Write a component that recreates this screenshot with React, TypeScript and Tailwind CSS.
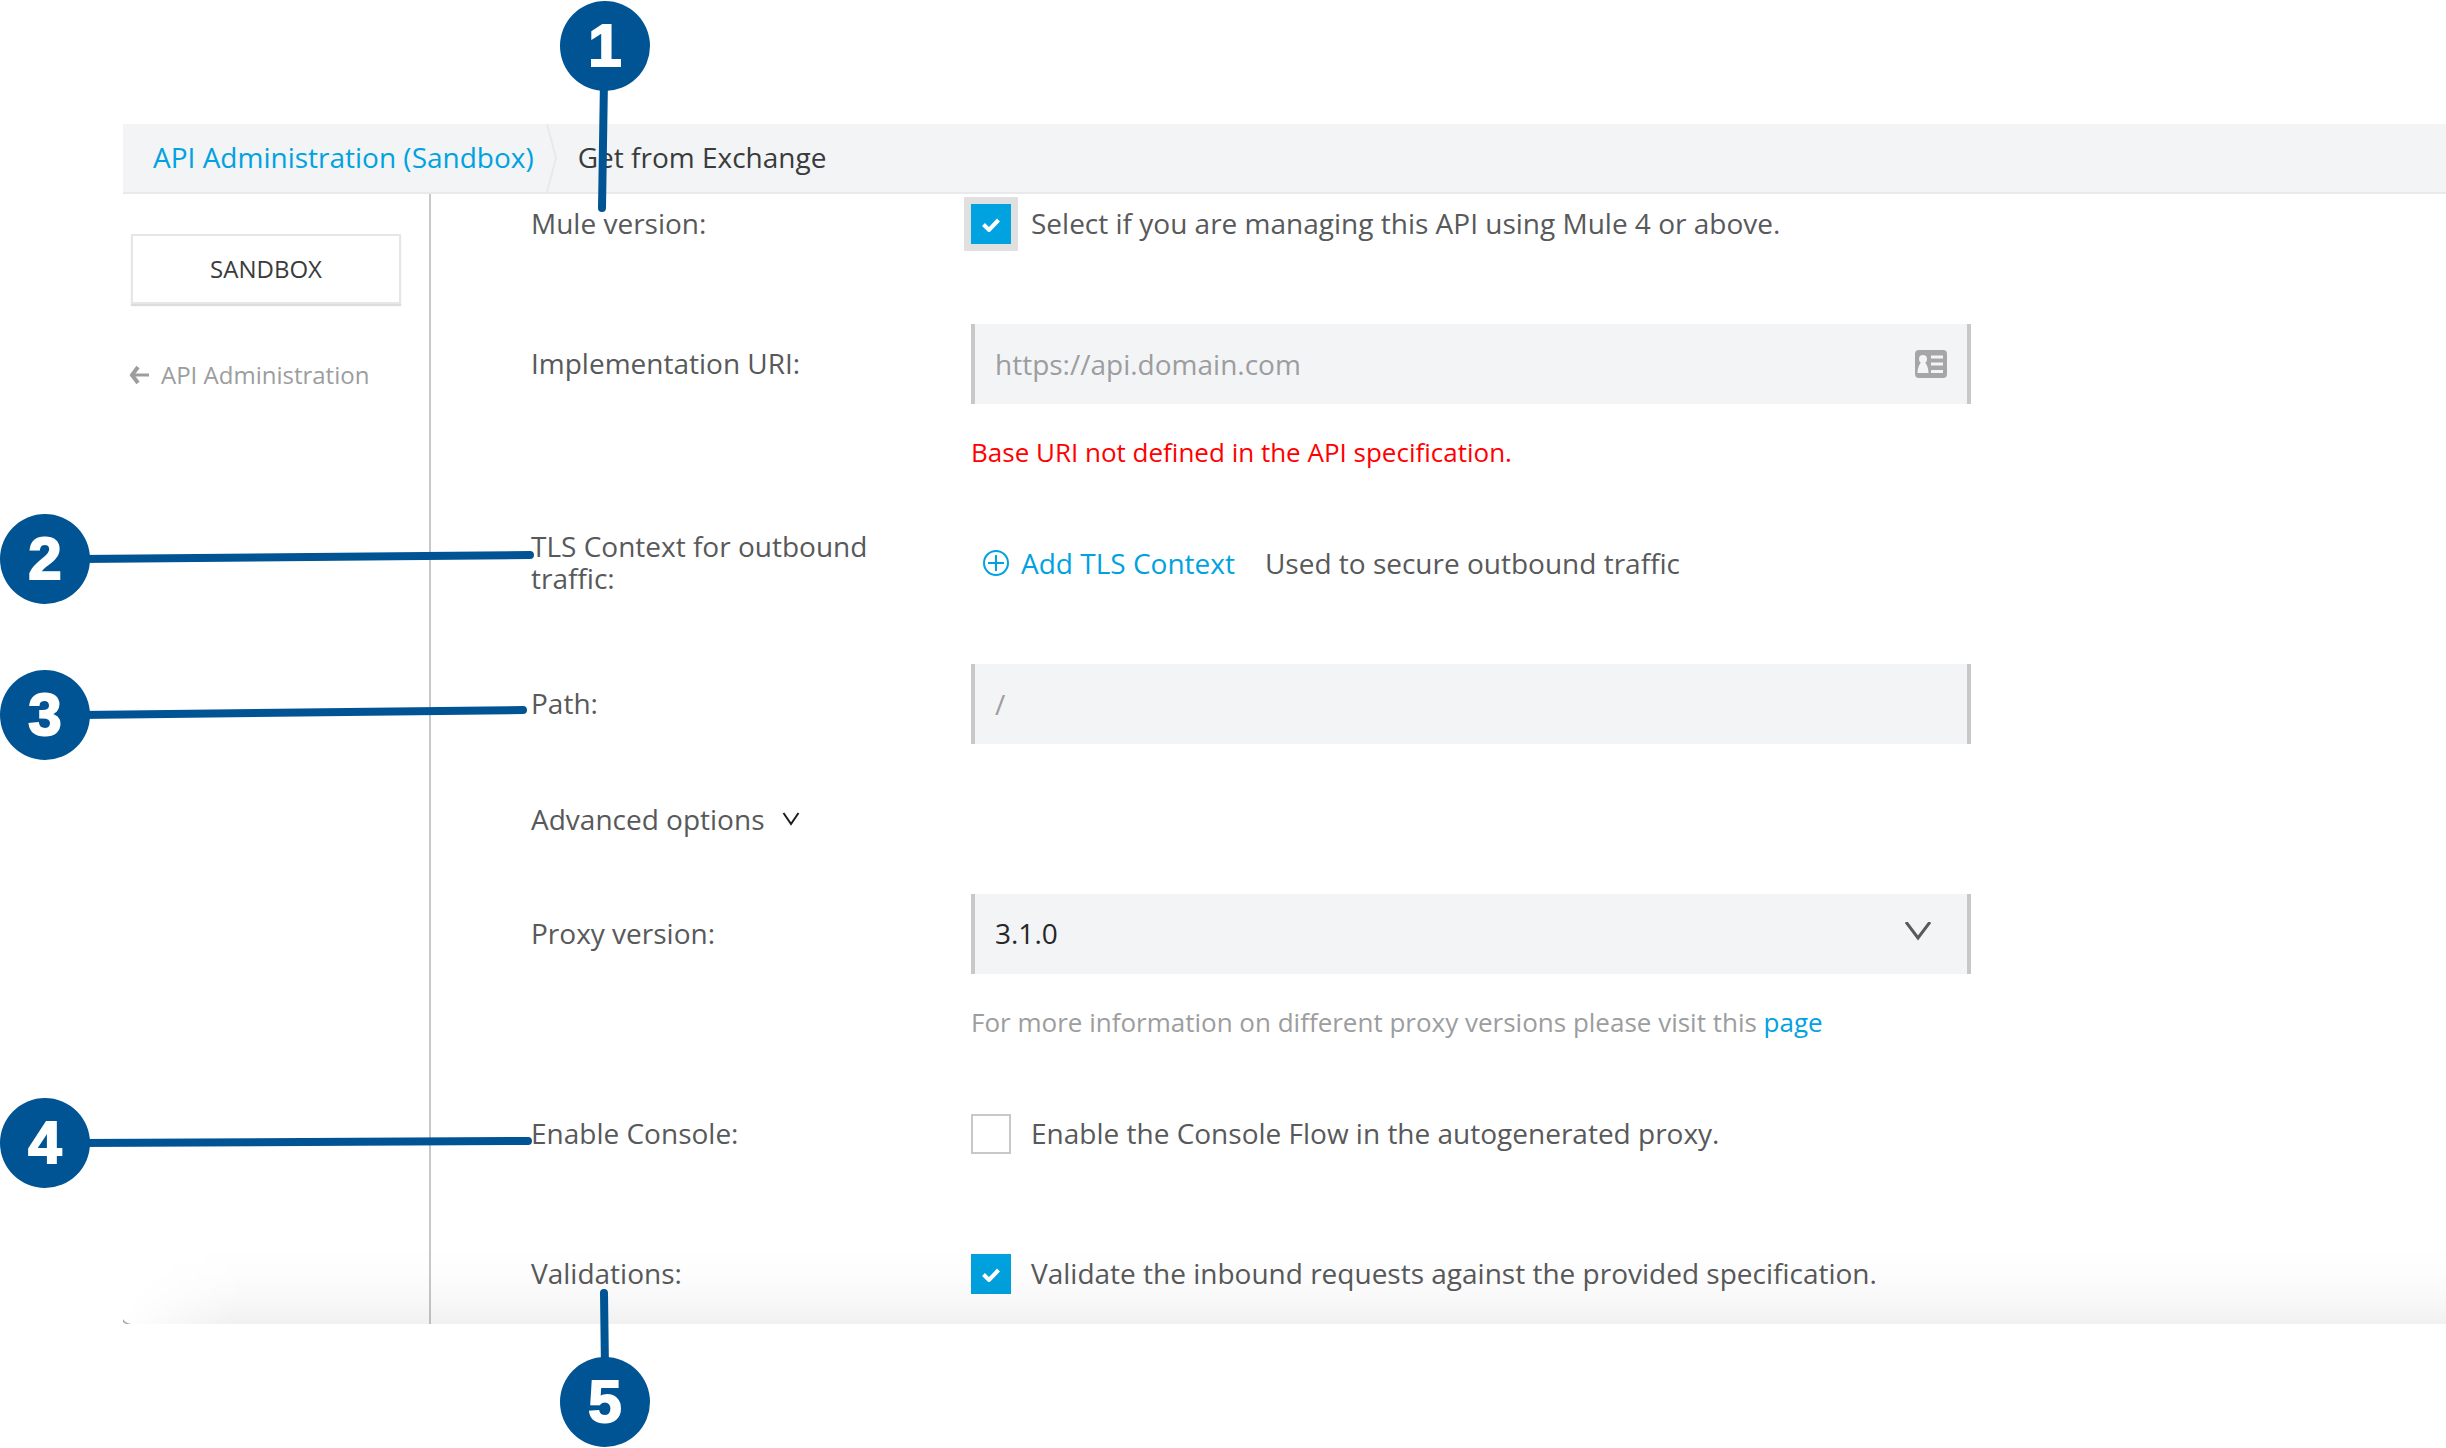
import React from "react";

function Tick() {
  return (
    <svg viewBox="0 0 18 14" className="pointer-events-none absolute left-[11px] top-[14px] hidden h-[14px] w-[18px] peer-checked:block" aria-hidden="true">
      <path d="M1.500 6.500 L7 12 L16.500 2" fill="none" stroke="#fff" strokeWidth="4" />
    </svg>
  );
}

function Check({ id, text, on, ring }: { id: string; text: string; on?: boolean; ring?: boolean }) {
  return (
    <div className="flex items-center gap-5">
      <span className={ring ? "relative h-10 w-10 ring-[7px] ring-[#e0e0e0]" : "relative h-10 w-10"}>
        <input
          id={id}
          type="checkbox"
          defaultChecked={on}
          className="peer block h-10 w-10 appearance-none border-2 border-[#c8c8c8] bg-white outline-none checked:border-[#00a2df] checked:bg-[#00a2df]"
        />
        <Tick />
      </span>
      <label htmlFor={id} className="pb-0.5">{text}</label>
    </div>
  );
}

function Row({ label, htmlFor, className, children }: { label: string; htmlFor?: string; className: string; children: React.ReactNode }) {
  return (
    <div className={className}>
      <label htmlFor={htmlFor} className="w-[440px] shrink-0 pb-0.5 pr-12">
        {label}
      </label>
      <div className="w-full max-w-[1000px]">{children}</div>
    </div>
  );
}

const field =
  "block h-20 w-full appearance-none border-x-4 border-[#c8c8ca] bg-[#f3f4f6] px-5 outline-none placeholder:text-[#9c9d9e]";

const pins = [
  { n: 1, pos: "left-[560px] top-[1px]", x1: 604, y1: 80, x2: 602, y2: 208 },
  { n: 2, pos: "left-0 top-[514px]", x1: 80, y1: 559, x2: 530, y2: 555 },
  { n: 3, pos: "left-0 top-[670px]", x1: 80, y1: 715, x2: 523, y2: 710 },
  { n: 4, pos: "left-0 top-[1098px]", x1: 80, y1: 1143, x2: 528, y2: 1141 },
  { n: 5, pos: "left-[560px] top-[1357px]", x1: 605, y1: 1370, x2: 604, y2: 1293 },
];

export default function App() {
  return (
    <div className="relative bg-white pb-[124px] pt-[124px] font-['Open_Sans',sans-serif] text-[28px] leading-8 text-[#58595a]">
      <div className="relative ml-[123px]">
        <nav className="flex h-[70px] items-stretch border-b-2 border-[#e8e9ea] bg-[#f3f4f6] pl-[30px]">
          <a href="#" className="flex items-center pb-0.5 text-[#00a2df]">API Administration (Sandbox)</a>
          <svg viewBox="0 0 12 68" className="ml-3 h-[68px] w-3" aria-hidden="true">
            <path d="M1 0 L10 34 L1 68" fill="none" stroke="#e8e9ea" strokeWidth="2" />
          </svg>
          <span className="ml-5 flex items-center pb-0.5 text-[#3a3b3c]">Get from Exchange</span>
        </nav>

        <div className="flex">
          <aside className="w-[308px] shrink-0 border-r-2 border-[#c8c8ca] pl-2 pt-10">
            <button type="button" className="block h-[70px] w-[270px] border-2 border-[#e6e6e6] bg-white text-2xl text-[#3a3b3c] shadow-[0_2px_1px_#dcdcdc]">
              SANDBOX
            </button>
            <a href="#" className="mt-[55px] flex items-center gap-3 text-2xl leading-8 text-[#9c9d9e]">
              <svg viewBox="0 0 20 18" className="-ml-0.5 h-[18px] w-5" aria-hidden="true">
                <path d="M20 9 H3" stroke="currentColor" strokeWidth="3" />
                <path d="M9 1 L3 9 L9 17" fill="none" stroke="currentColor" strokeWidth="4" />
              </svg>
              API Administration
            </a>
          </aside>

          <main className="min-w-0 flex-1 pb-[30px] pl-[100px] pt-[10px]">
            <form>
              <Row label="Mule version:" htmlFor="mule" className="flex items-center">
                <Check id="mule" on ring text="Select if you are managing this API using Mule 4 or above." />
              </Row>
              <Row label="Implementation URI:" htmlFor="uri" className="mt-20 flex items-center">
                <div className="relative">
                  <input id="uri" type="text" placeholder="https://api.domain.com" className={field} />
                  <svg viewBox="0 0 32 28" className="absolute right-6 top-[26px] h-7 w-8" aria-hidden="true">
                    <rect width="32" height="28" rx="4" fill="#a6a6a6" />
                    <circle cx="8" cy="9" r="4" fill="#f3f4f6" />
                    <path d="M2.500 23 C2.500 17 5 14 6 12 H10 C11 14 13.500 17 13.500 23 Z" fill="#f3f4f6" />
                    <path d="M16 7 H28 M16 14 H28 M16 21.500 H28" stroke="#f3f4f6" strokeWidth="3" />
                  </svg>
                </div>
              </Row>
              <p className="ml-[440px] mt-8 text-[26px] text-[#f00]">Base URI not defined in the API specification.</p>
              <Row label="TLS Context for outbound traffic:" htmlFor="tls" className="mt-[62px] flex items-center">
                <div className="flex items-center gap-[30px] pl-3">
                  <button id="tls" type="button" className="flex items-center gap-3 text-[#00a2df]">
                    <svg viewBox="0 0 26 26" className="h-[26px] w-[26px]" aria-hidden="true">
                      <circle cx="13" cy="13" r="12" fill="none" stroke="currentColor" strokeWidth="2" />
                      <path d="M13 5 V21 M5 13 H21" stroke="currentColor" strokeWidth="2" />
                    </svg>
                    Add TLS Context
                  </button>
                  <span>Used to secure outbound traffic</span>
                </div>
              </Row>
              <Row label="Path:" htmlFor="path" className="mt-[68px] flex items-center">
                <input id="path" type="text" placeholder="/" className={field} />
              </Row>
              <button type="button" className="mt-[59px] flex items-center gap-[18px]">
                Advanced options
                <svg viewBox="0 0 18 14" className="h-[14px] w-[18px]" aria-hidden="true">
                  <path d="M1.500 1 L9 12 L16.500 1" fill="none" stroke="#1c1c1c" strokeWidth="2" />
                </svg>
              </button>
              <Row label="Proxy version:" htmlFor="proxy" className="mt-[59px] flex items-center">
                <div className="relative">
                  <select id="proxy" defaultValue="3.1.0" className={field + " pb-0.5 text-[#262728]"}>
                    <option>3.1.0</option>
                  </select>
                  <svg viewBox="0 0 26 19" className="pointer-events-none absolute right-10 top-7 h-[19px] w-[26px]" aria-hidden="true">
                    <path d="M1 0 L13 16 L25 0" fill="none" stroke="#58595a" strokeWidth="3" />
                  </svg>
                </div>
              </Row>
              <p className="ml-[440px] mt-8 text-[26px] text-[#9c9d9e]">
                For more information on different proxy versions please visit this <a href="#" className="text-[#00a2df]">page</a>
              </p>
              <Row label="Enable Console:" htmlFor="console" className="mt-[76px] flex items-center">
                <Check id="console" text="Enable the Console Flow in the autogenerated proxy." />
              </Row>
              <Row label="Validations:" htmlFor="valid" className="mt-[100px] flex items-center">
                <Check id="valid" on text="Validate the inbound requests against the provided specification." />
              </Row>
            </form>
          </main>
        </div>
        <div className="pointer-events-none absolute inset-x-0 bottom-0 h-20 bg-[linear-gradient(to_top,rgba(0,0,0,0.055),rgba(0,0,0,0.025)_35%,rgba(0,0,0,0.008)_65%,transparent)] [mask-image:linear-gradient(115deg,transparent_30px,black_130px)]" />
        <svg viewBox="0 0 8 5" className="absolute bottom-0 left-0 h-[5px] w-2" aria-hidden="true">
          <path d="M0 0 Q2 4 8 5 H3 L0 3 Z" fill="#a6a6a6" />
        </svg>
      </div>

      <svg className="pointer-events-none absolute inset-0 h-full w-full" aria-hidden="true">
        {pins.map((p) => (
          <line key={p.n} x1={p.x1} y1={p.y1} x2={p.x2} y2={p.y2} stroke="#005493" strokeWidth="8" strokeLinecap="round" />
        ))}
      </svg>
      {pins.map((p) => (
        <span key={p.n} className={"absolute flex h-[90px] w-[90px] items-center justify-center rounded-full bg-[#005493] font-['Liberation_Sans',sans-serif] text-[60px] font-bold text-white [-webkit-text-stroke:2px_white] " + p.pos}>
          {p.n}
        </span>
      ))}
    </div>
  );
}
